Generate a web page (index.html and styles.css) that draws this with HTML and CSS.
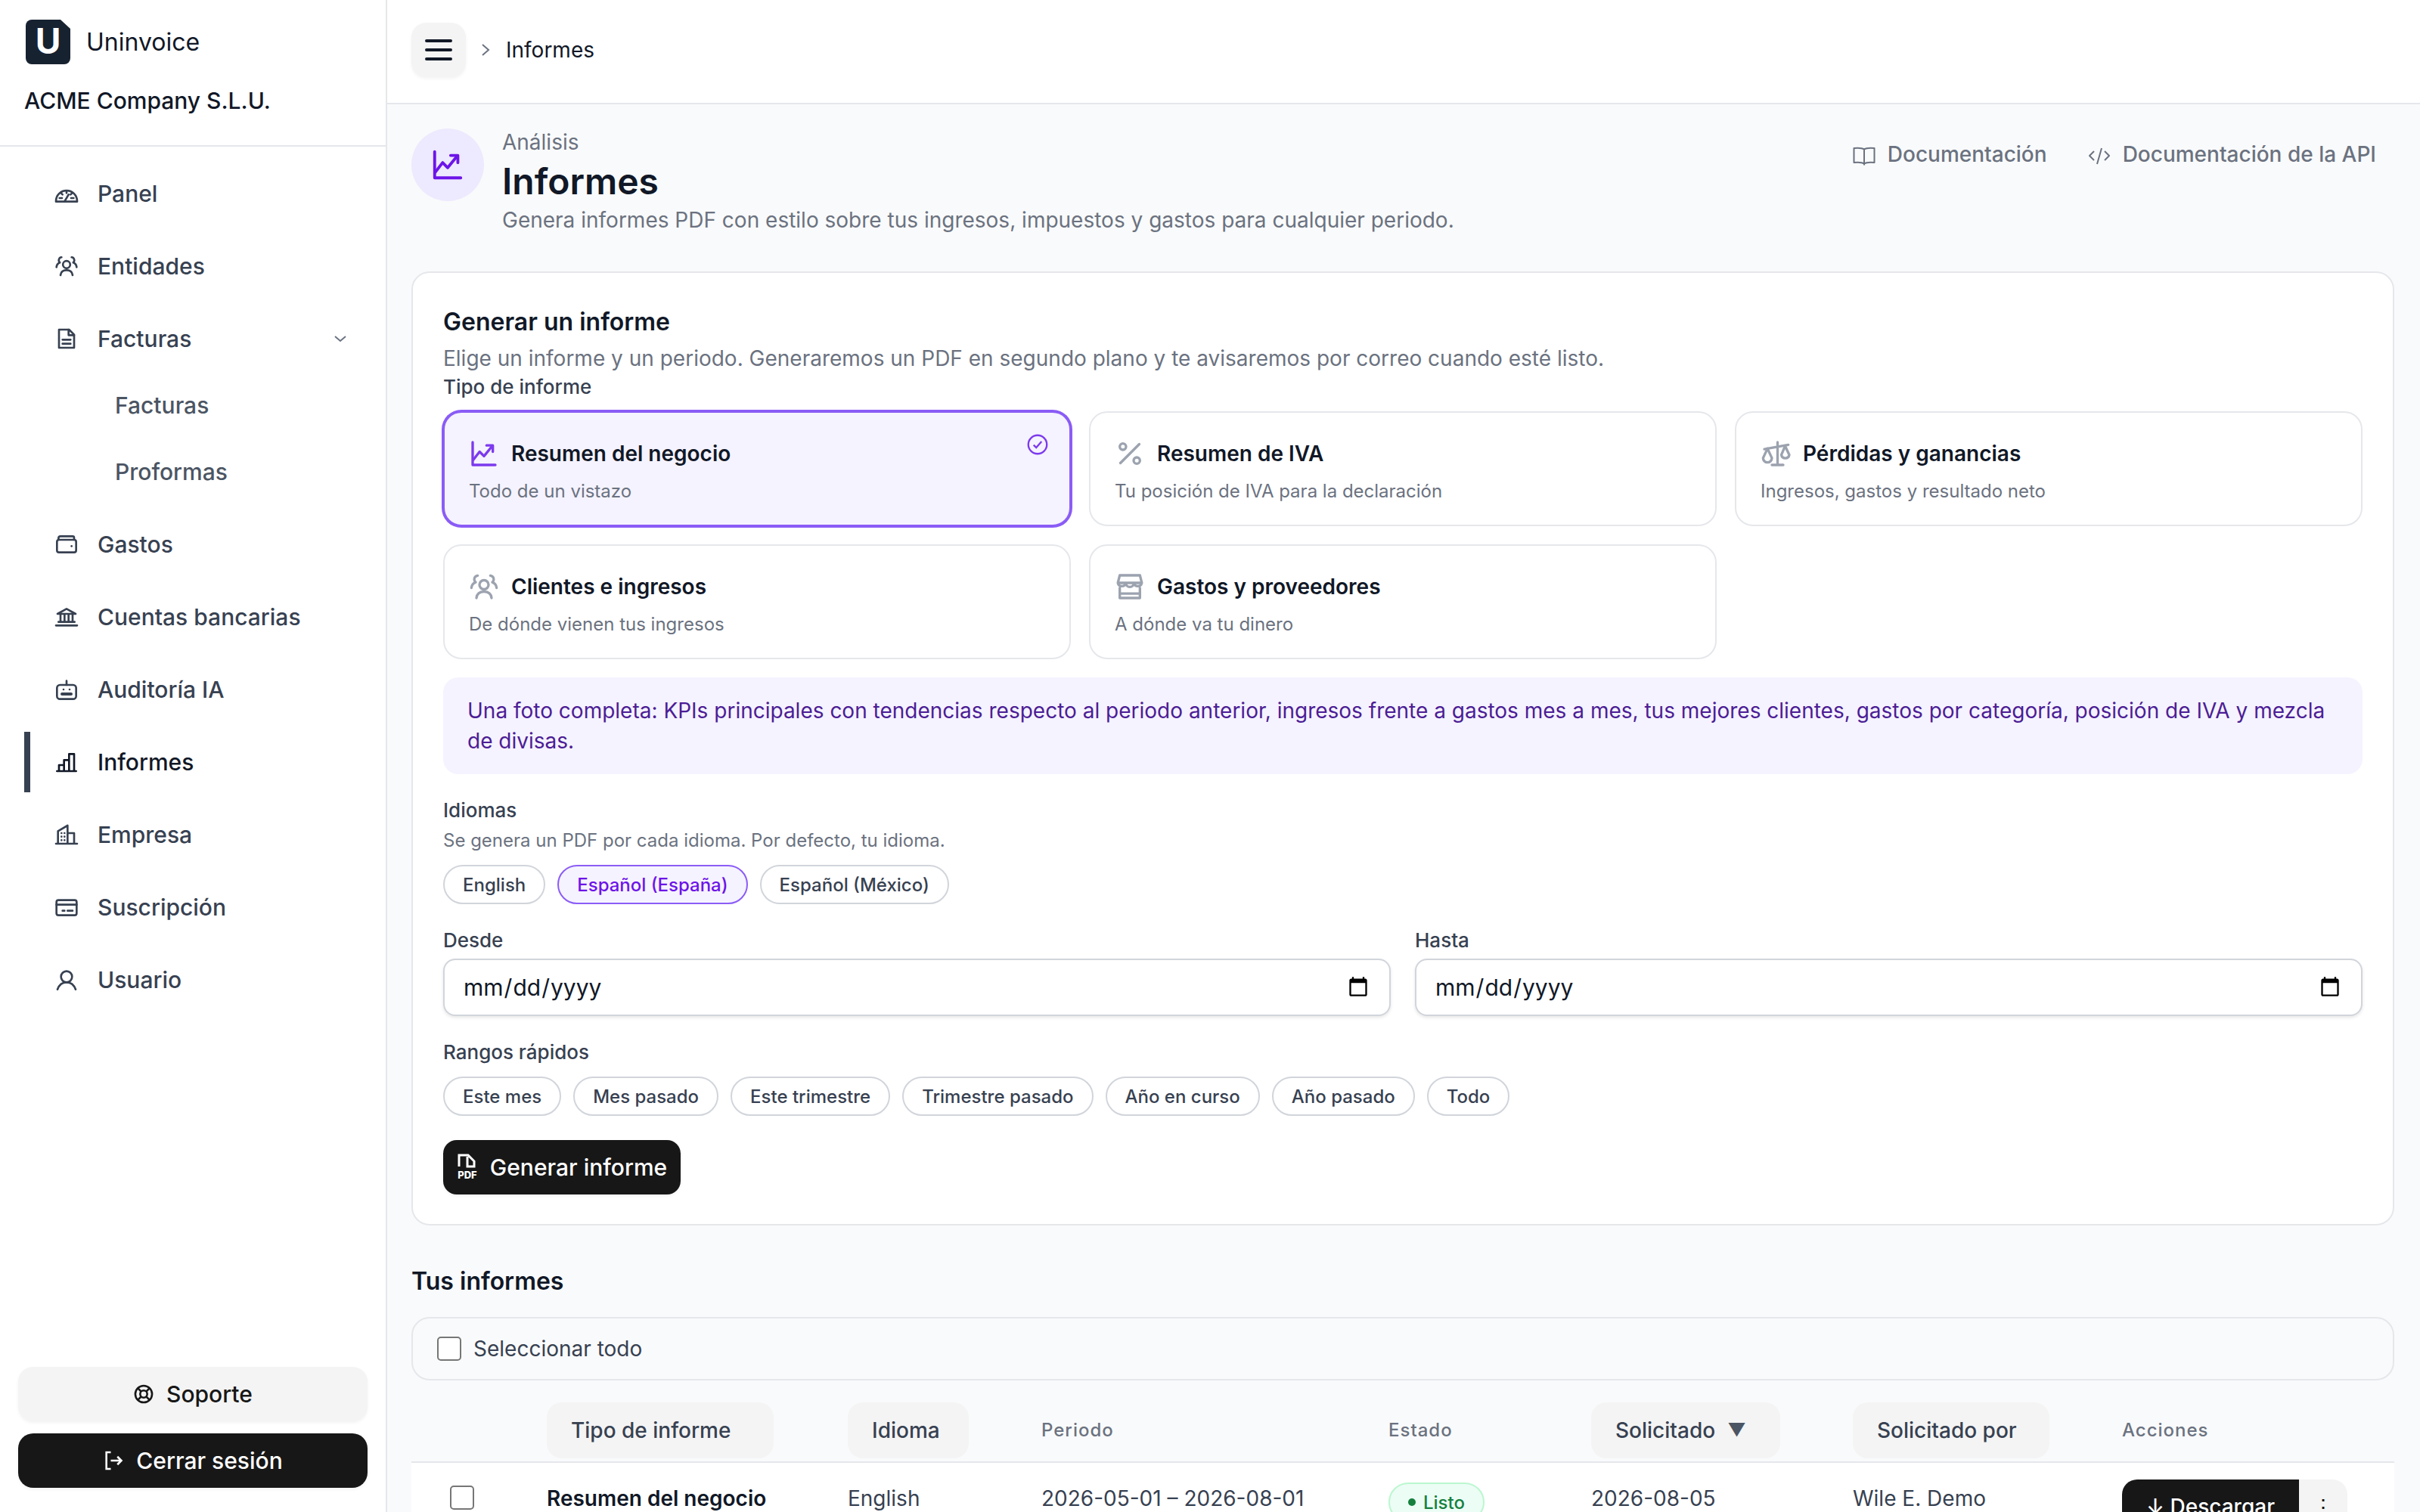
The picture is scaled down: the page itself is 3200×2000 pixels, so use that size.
FILE: index.html
```html
<!DOCTYPE html>
<html lang="es">
<head>
    <meta charset="UTF-8">
    <meta name="viewport" content="width=device-width, initial-scale=1.0">
    <title>Informes - Uninvoice</title>
    <link rel="stylesheet" href="styles.css">
</head>
<body>
    <svg class="sprites" width="0" height="0">
        <symbol id="i-trend" viewBox="0 0 24 24"><path d="M3 3v18h18"/><path d="M3.5 17l5-6.5 3.5 3.5 6.5-8"/><path d="M14 5.5h5v5"/></symbol>
        <symbol id="i-group" viewBox="0 0 24 24"><circle cx="12" cy="10.5" r="3.6"/><path d="M6 21c.4-3.4 2.8-5 6-5s5.600 1.600 6 5"/><path d="M7 3.200a3 3 0 0 0-1.600 5.300c-2 .8-3.200 2.300-3.400 4.500"/><path d="M17 3.200a3 3 0 0 1 1.600 5.300c2 .8 3.200 2.300 3.400 4.500"/></symbol>
    </svg>

    <div class="app">
        <aside class="sidebar">
            <div class="brand">
                <div class="brand-row">
                    <svg class="logo" viewBox="0 0 59 59"><path d="M8 0h38l13 12v39a8 8 0 0 1-8 8H8a8 8 0 0 1-8-8V8a8 8 0 0 1 8-8z" fill="#172231"/><text x="29.500" y="45" text-anchor="middle" class="logo-letter">U</text></svg>
                    <span class="brand-name">Uninvoice</span>
                </div>
                <div class="company">ACME Company S.L.U.</div>
            </div>

            <nav class="nav">
                <a class="nav-item">
                    <svg class="nav-icon" viewBox="0 0 24 24"><path d="M1.500 19.500a10.500 10.500 0 0 1 21 0v.5h-21z"/><path d="M12 9.500v2M6.500 11.500l1.500 1.500M17.500 11.500L16 13M5 16.500h2.500M16.500 16.500H19M10.500 19l3.500-6"/></svg>
                    Panel
                </a>
                <a class="nav-item">
                    <svg class="nav-icon"><use href="#i-group"/></svg>
                    Entidades
                </a>
                <a class="nav-item">
                    <svg class="nav-icon" viewBox="0 0 24 24"><path d="M4.500 3h10l5 5v13h-15z"/><path d="M14 3v5.500h5.500M8 13h8M8 17h8"/></svg>
                    Facturas
                    <svg class="nav-caret" viewBox="0 0 24 24"><path d="M5 9l7 6 7-6"/></svg>
                </a>
                <div class="nav-sub">
                    <a class="nav-subitem">Facturas</a>
                    <a class="nav-subitem">Proformas</a>
                </div>
                <a class="nav-item">
                    <svg class="nav-icon" viewBox="0 0 24 24"><path d="M4 7.500V6a2 2 0 0 1 2-2h12a1.500 1.500 0 0 1 1.500 1.500V7.500"/><rect x="2.500" y="7.500" width="19" height="12.500" rx="2"/><path d="M17 13.800h.01"/></svg>
                    Gastos
                </a>
                <a class="nav-item">
                    <svg class="nav-icon" viewBox="0 0 24 24"><path d="M3 9l9-5 9 5z"/><path d="M6 10v7M10 10v7M14 10v7M18 10v7M4 17h16M1.500 20.500h21"/></svg>
                    Cuentas bancarias
                </a>
                <a class="nav-item">
                    <svg class="nav-icon" viewBox="0 0 24 24"><rect x="2.500" y="7.500" width="19" height="14" rx="3"/><path d="M12 7.500V3.500M9 12h.01M15 12h.01"/><path d="M7.500 16.500h9" class="thick"/></svg>
                    Auditoría IA
                </a>
                <a class="nav-item active">
                    <svg class="nav-icon" viewBox="0 0 24 24"><path d="M2.500 21h19M4.500 21v-6h5v6M9.500 21V10h5v11M14.500 21V4h5v17"/></svg>
                    Informes
                </a>
                <a class="nav-item">
                    <svg class="nav-icon" viewBox="0 0 24 24"><path d="M1.500 21h21M3.500 21V8.500L13 3v18M13 10.500h6.500V21"/><path d="M7 10.500h.01M10 10.500h.01M7 14h.01M10 14h.01M7 17.500h.01M10 17.500h.01"/></svg>
                    Empresa
                </a>
                <a class="nav-item">
                    <svg class="nav-icon" viewBox="0 0 24 24"><rect x="2" y="5" width="20" height="15" rx="2"/><path d="M2 9.500h20M8 15.500h2M13 15.500h5"/></svg>
                    Suscripción
                </a>
                <a class="nav-item">
                    <svg class="nav-icon" viewBox="0 0 24 24"><circle cx="12" cy="9" r="5.500"/><path d="M3 21.500c1.500-4 4.800-7 9-7s7.500 3 9 7"/></svg>
                    Usuario
                </a>
            </nav>

            <div class="sidebar-foot">
                <button class="btn btn-light">
                    <svg class="btn-icon" viewBox="0 0 24 24"><circle cx="12" cy="12" r="9.500"/><circle cx="12" cy="12" r="4"/><path d="M5.300 5.300l3.900 3.900M18.700 5.300l-3.900 3.900M5.300 18.700l3.900-3.900M18.700 18.700l-3.900-3.900"/></svg>
                    Soporte
                </button>
                <button class="btn btn-dark">
                    <svg class="btn-icon" viewBox="0 0 24 24"><path d="M9 2.500H4v19h5M9 12h12M16.500 7.500L21 12l-4.500 4.500"/></svg>
                    Cerrar sesión
                </button>
            </div>
        </aside>

        <div class="content">
            <header class="topbar">
                <button class="menu-btn">
                    <svg class="menu-icon" viewBox="0 0 36 28"><path d="M2 2h32M2 14h32M2 26h32"/></svg>
                </button>
                <svg class="crumb-sep" viewBox="0 0 12 18"><path d="M2 2l8 7-8 7"/></svg>
                <span class="crumb">Informes</span>
            </header>

            <main class="main">
                <div class="page-head">
                    <div class="page-badge">
                        <svg class="page-badge-icon"><use href="#i-trend"/></svg>
                    </div>
                    <div class="page-titles">
                        <div class="eyebrow">Análisis</div>
                        <h1>Informes</h1>
                        <p class="lead">Genera informes PDF con estilo sobre tus ingresos, impuestos y gastos para cualquier periodo.</p>
                    </div>
                    <div class="doc-links">
                        <a class="doc-link">
                            <svg viewBox="0 0 30 26"><path d="M15 4.500C12 2.500 6 2.500 1.500 3v19c4.500-.5 10.500-.5 13.500 1.500 3-2 9-2 13.500-1.500V3C24 2.500 18 2.500 15 4.500zM15 4.500v21"/></svg>
                            Documentación
                        </a>
                        <a class="doc-link">
                            <svg viewBox="0 0 30 26"><path d="M8 7l-6 6 6 6M22 7l6 6-6 6M18 3l-6 21"/></svg>
                            Documentación de la API
                        </a>
                    </div>
                </div>

                <section class="card">
                    <h2>Generar un informe</h2>
                    <p class="card-lead">Elige un informe y un periodo. Generaremos un PDF en segundo plano y te avisaremos por correo cuando esté listo.</p>

                    <div class="field-label type-label">Tipo de informe</div>
                    <div class="type-grid">
                        <div class="type-card selected">
                            <svg class="check" viewBox="0 0 24 24"><circle cx="12" cy="12" r="10.500"/><path d="M7.500 12.500l3 3 6-7"/></svg>
                            <div class="type-title">
                                <svg class="type-icon"><use href="#i-trend"/></svg>
                                Resumen del negocio
                            </div>
                            <div class="type-sub">Todo de un vistazo</div>
                        </div>
                        <div class="type-card">
                            <div class="type-title">
                                <svg class="type-icon" viewBox="0 0 24 24"><path d="M19.500 4.500l-15 15"/><circle cx="6.500" cy="6.500" r="2.500"/><circle cx="17.500" cy="17.500" r="2.500"/></svg>
                                Resumen de IVA
                            </div>
                            <div class="type-sub">Tu posición de IVA para la declaración</div>
                        </div>
                        <div class="type-card">
                            <div class="type-title">
                                <svg class="type-icon" viewBox="0 0 24 24"><path d="M13.500 3v18M9 21h9M3 8.500l19-3.500"/><path d="M5.500 8l-3.500 7.500a3.500 3.500 0 0 0 7 0z"/><path d="M19.500 6l-3 7a3.200 3.200 0 0 0 6.300 0z"/></svg>
                                Pérdidas y ganancias
                            </div>
                            <div class="type-sub">Ingresos, gastos y resultado neto</div>
                        </div>
                        <div class="type-card">
                            <div class="type-title">
                                <svg class="type-icon"><use href="#i-group"/></svg>
                                Clientes e ingresos
                            </div>
                            <div class="type-sub">De dónde vienen tus ingresos</div>
                        </div>
                        <div class="type-card">
                            <div class="type-title">
                                <svg class="type-icon" viewBox="0 0 24 24"><path d="M4 3h16l1.500 6h-19zM2.500 9a3.200 3.200 0 0 0 6.300 0 3.200 3.200 0 0 0 6.400 0 3.200 3.200 0 0 0 6.300 0M4 13v8h16v-8M4 17.500h16"/></svg>
                                Gastos y proveedores
                            </div>
                            <div class="type-sub">A dónde va tu dinero</div>
                        </div>
                    </div>

                    <div class="type-note">Una foto completa: KPIs principales con tendencias respecto al periodo anterior, ingresos frente a gastos mes a mes, tus mejores clientes, gastos por categoría, posición de IVA y mezcla de divisas.</div>

                    <div class="field-label lang-label">Idiomas</div>
                    <div class="hint">Se genera un PDF por cada idioma. Por defecto, tu idioma.</div>
                    <div class="chips">
                        <span class="chip">English</span>
                        <span class="chip active">Español (España)</span>
                        <span class="chip">Español (México)</span>
                    </div>

                    <div class="date-row">
                        <label class="date-field">
                            <span class="field-label">Desde</span>
                            <input type="date" class="date-input">
                        </label>
                        <label class="date-field">
                            <span class="field-label">Hasta</span>
                            <input type="date" class="date-input">
                        </label>
                    </div>

                    <div class="field-label range-label">Rangos rápidos</div>
                    <div class="chips">
                        <span class="chip">Este mes</span>
                        <span class="chip">Mes pasado</span>
                        <span class="chip">Este trimestre</span>
                        <span class="chip">Trimestre pasado</span>
                        <span class="chip">Año en curso</span>
                        <span class="chip">Año pasado</span>
                        <span class="chip">Todo</span>
                    </div>

                    <button class="btn btn-dark generate">
                        <svg class="pdf-icon" viewBox="0 0 28 36"><path d="M3 17V2h12l8 8v7h-9V4"/><text x="14" y="33" text-anchor="middle" class="pdf-text">PDF</text></svg>
                        Generar informe
                    </button>
                </section>

                <h2 class="list-title">Tus informes</h2>
                <label class="select-all">
                    <span class="box"></span>
                    Seleccionar todo
                </label>

                <table class="reports">
                    <colgroup>
                        <col class="c-check"><col class="c-type"><col class="c-lang"><col class="c-period"><col class="c-status"><col class="c-date"><col class="c-by"><col class="c-actions">
                    </colgroup>
                    <thead>
                        <tr>
                            <th></th>
                            <th><span class="sort type-sort">Tipo de informe</span></th>
                            <th><span class="sort lang-sort">Idioma</span></th>
                            <th class="plain">Periodo</th>
                            <th class="plain">Estado</th>
                            <th><span class="sort date-sort">Solicitado <span class="arrow">▼</span></span></th>
                            <th><span class="sort by-sort">Solicitado por</span></th>
                            <th class="plain">Acciones</th>
                        </tr>
                    </thead>
                    <tbody>
                        <tr>
                            <td><span class="box row-box"></span></td>
                            <td class="strong">Resumen del negocio</td>
                            <td>English</td>
                            <td>2026-05-01 – 2026-08-01</td>
                            <td><span class="status"><span class="dot"></span>Listo</span></td>
                            <td>2026-08-05</td>
                            <td>Wile E. Demo</td>
                            <td>
                                <div class="row-actions">
                                    <span class="act-main">↓ Descargar</span>
                                    <span class="act-more">⋮</span>
                                </div>
                            </td>
                        </tr>
                    </tbody>
                </table>
            </main>
        </div>
    </div>
</body>
</html>
```

FILE: styles.css
```css
* {
    box-sizing: border-box;
}
html, body {
    margin: 0;
    height: 2000px;
    overflow: hidden;
}
body {
    font-family: 'Inter', 'Liberation Sans', sans-serif;
    color: #111827;
    background-color: #ffffff;
}
h1, h2, p {
    margin: 0;
}
.sprites {
    position: absolute;
}
symbol path, symbol circle {
    fill: none;
    stroke: currentColor;
    stroke-width: 2;
    stroke-linecap: round;
    stroke-linejoin: round;
}
.app {
    display: flex;
    height: 2000px;
}

/* sidebar */
.sidebar {
    width: 512px;
    flex: none;
    display: flex;
    flex-direction: column;
    border-right: 2px solid #e5e7eb;
    background-color: #ffffff;
}
.brand {
    height: 194px;
    padding: 26px 32px 0;
    border-bottom: 2px solid #e5e7eb;
}
.brand-row {
    display: flex;
    align-items: center;
    gap: 21px;
    margin-left: 2px;
}
.logo {
    width: 59px;
    height: 59px;
}
.logo-letter {
    font-family: 'Inter', sans-serif;
    font-size: 46px;
    font-weight: 700;
    fill: #ffffff;
}
.brand-name {
    font-size: 32px;
    color: #111827;
}
.company {
    margin-top: 28px;
    font-size: 30px;
    font-weight: 500;
    line-height: 40px;
    color: #111827;
}
.nav {
    display: flex;
    flex-direction: column;
    gap: 16px;
    padding: 22px 24px 0 32px;
    flex: 1;
}
.nav-item {
    display: flex;
    align-items: center;
    height: 80px;
    padding-left: 40px;
    gap: 25px;
    font-size: 30px;
    font-weight: 500;
    color: #374151;
}
.nav-item.active {
    border-left: 8px solid #374151;
    padding-left: 32px;
    color: #111827;
}
.nav-icon {
    width: 32px;
    height: 32px;
    flex: none;
    fill: none;
    stroke: currentColor;
    stroke-width: 2;
    stroke-linecap: round;
    stroke-linejoin: round;
}
.nav-icon .thick {
    stroke-width: 3;
}
.nav-caret {
    width: 24px;
    height: 24px;
    margin-left: auto;
    margin-right: 24px;
    fill: none;
    stroke: #6b7280;
    stroke-width: 2;
}
.nav-sub {
    display: flex;
    flex-direction: column;
    gap: 8px;
    margin-top: -8px;
}
.nav-subitem {
    height: 80px;
    line-height: 80px;
    padding-left: 120px;
    font-size: 30px;
    font-weight: 500;
    color: #4b5563;
}
.sidebar-foot {
    display: flex;
    flex-direction: column;
    gap: 16px;
    padding: 0 24px 32px;
}

/* buttons */
.btn {
    display: flex;
    align-items: center;
    justify-content: center;
    gap: 16px;
    height: 72px;
    border: none;
    border-radius: 20px;
    font-family: inherit;
    font-size: 30px;
    font-weight: 500;
    box-shadow: 0 2px 4px rgba(0, 0, 0, 0.05);
}
.btn-light {
    background-color: #f4f4f4;
    color: #171717;
}
.btn-dark {
    background-color: #171717;
    color: #ffffff;
}
.btn-icon {
    width: 28px;
    height: 28px;
    fill: none;
    stroke: currentColor;
    stroke-width: 2.200;
}

/* top bar */
.content {
    flex: 1;
    min-width: 0;
    display: flex;
    flex-direction: column;
}
.topbar {
    height: 138px;
    flex: none;
    display: flex;
    align-items: center;
    padding: 0 32px 4px;
    border-bottom: 2px solid #e5e7eb;
    background-color: #ffffff;
}
.menu-btn {
    width: 72px;
    height: 72px;
    display: flex;
    align-items: center;
    justify-content: center;
    border: none;
    border-radius: 20px;
    background-color: #f4f4f4;
    box-shadow: 0 2px 4px rgba(0, 0, 0, 0.05);
}
.menu-icon {
    width: 36px;
    height: 28px;
    fill: none;
    stroke: #111827;
    stroke-width: 4;
    stroke-linecap: round;
}
.crumb-sep {
    width: 12px;
    height: 18px;
    margin: 0 21px 0 20px;
    fill: none;
    stroke: #6b7280;
    stroke-width: 2;
}
.crumb {
    font-size: 28px;
    color: #111827;
}

/* page */
.main {
    flex: 1;
    min-height: 0;
    overflow: hidden;
    padding: 32px 34px 0 32px;
    background-color: #f9fafb;
}
.page-head {
    display: flex;
    gap: 24px;
}
.page-badge {
    width: 96px;
    height: 96px;
    flex: none;
    display: flex;
    align-items: center;
    justify-content: center;
    border-radius: 50%;
    background-color: #ede9fe;
    color: #6d14e8;
}
.page-badge-icon {
    width: 46px;
    height: 46px;
}
.page-titles {
    flex: 1;
}
.eyebrow {
    font-size: 28px;
    line-height: 36px;
    color: #6b7280;
}
h1 {
    margin-top: 6px;
    font-size: 48px;
    font-weight: 600;
    line-height: 56px;
    color: #111827;
}
.lead {
    margin-top: 3px;
    font-size: 28px;
    line-height: 40px;
    color: #6b7280;
}
.doc-links {
    display: flex;
    gap: 54px;
    padding: 14px 24px 0 0;
}
.doc-link {
    display: flex;
    align-items: center;
    gap: 16px;
    height: 40px;
    font-size: 28px;
    font-weight: 500;
    color: #6b7280;
}
.doc-link svg {
    width: 30px;
    height: 26px;
    fill: none;
    stroke: #6b7280;
    stroke-width: 2;
    stroke-linejoin: round;
    margin-top: 4px;
}

/* generator card */
.card {
    margin-top: 48px;
    height: 1262px;
    padding: 40px;
    border: 2px solid #e5e7eb;
    border-radius: 24px;
    background-color: #ffffff;
}
.card h2, .list-title {
    font-size: 32px;
    font-weight: 600;
    line-height: 44px;
    color: #111827;
}
.card h2 {
    margin-top: 3px;
}
.card-lead {
    margin-top: 6px;
    font-size: 28px;
    line-height: 40px;
    color: #6b7280;
}
.field-label {
    display: block;
    font-size: 26px;
    font-weight: 500;
    line-height: 36px;
    color: #374151;
}
.type-grid {
    display: grid;
    grid-template-columns: repeat(3, 1fr);
    grid-auto-rows: 152px;
    gap: 24px;
    margin-top: 14px;
}
.type-card {
    position: relative;
    padding: 34px 32px 0;
    border: 2px solid #e5e7eb;
    border-radius: 24px;
    background-color: #ffffff;
}
.type-card.selected {
    border-color: #8b5cf6;
    box-shadow: 0 0 0 2px #8b5cf6;
    background-color: #f5f3ff;
}
.type-title {
    display: flex;
    align-items: center;
    gap: 16px;
    font-size: 28px;
    font-weight: 600;
    line-height: 40px;
    color: #111827;
}
.type-icon {
    width: 40px;
    height: 40px;
    flex: none;
    color: #9ca3af;
    fill: none;
    stroke: #9ca3af;
    stroke-width: 2;
    stroke-linecap: round;
    stroke-linejoin: round;
}
.selected .type-icon {
    color: #7c3aed;
}
.type-sub {
    margin-top: 12px;
    font-size: 24px;
    line-height: 36px;
    color: #6b7280;
}
.check {
    position: absolute;
    top: 28px;
    right: 28px;
    width: 28px;
    height: 28px;
    fill: none;
    stroke: #7c3aed;
    stroke-width: 2;
}
.type-note {
    margin-top: 24px;
    padding: 24px 32px;
    border-radius: 20px;
    font-size: 28px;
    line-height: 40px;
    color: #4c1d95;
    background-color: #f5f3ff;
}
.lang-label {
    margin-top: 30px;
}
.hint {
    margin-top: 4px;
    font-size: 24px;
    line-height: 36px;
    color: #6b7280;
}
.chips {
    display: flex;
    gap: 16px;
    margin-top: 14px;
}
.chip {
    height: 52px;
    display: flex;
    align-items: center;
    padding: 0 24px;
    border: 2px solid #d1d5db;
    border-radius: 26px;
    font-size: 24px;
    font-weight: 500;
    color: #374151;
    background-color: #ffffff;
}
.chip.active {
    border-color: #8b5cf6;
    color: #6d14e8;
    background-color: #f5f3ff;
}
.date-row {
    display: grid;
    grid-template-columns: 1fr 1fr;
    gap: 32px;
    margin-top: 30px;
}
.date-input {
    display: block;
    width: 100%;
    height: 76px;
    margin-top: 6px;
    padding: 0 24px;
    border: 2px solid #d1d5db;
    border-radius: 16px;
    font-family: inherit;
    font-size: 30px;
    color: #111827;
    background-color: #ffffff;
    box-shadow: 0 2px 4px rgba(0, 0, 0, 0.1);
}
.range-label {
    margin-top: 30px;
}
.generate {
    margin-top: 32px;
    width: 314px;
    border-radius: 18px;
}
.pdf-icon {
    width: 28px;
    height: 36px;
    fill: none;
    stroke: #ffffff;
    stroke-width: 3;
}
.pdf-text {
    font-family: 'Inter', sans-serif;
    font-size: 13px;
    font-weight: 800;
    fill: #ffffff;
    stroke: none;
}

/* report list */
.list-title {
    margin-top: 52px;
}
.select-all {
    display: flex;
    align-items: center;
    gap: 16px;
    height: 84px;
    margin-top: 25px;
    padding-left: 32px;
    border: 2px solid #e5e7eb;
    border-radius: 24px;
    font-size: 28px;
    color: #374151;
    background-color: #f9fafb;
}
.box {
    display: inline-block;
    width: 32px;
    height: 32px;
    border: 2px solid #767676;
    border-radius: 5px;
    background-color: #ffffff;
}
.reports {
    width: 100%;
    margin-top: 24px;
    table-layout: fixed;
    border-collapse: collapse;
    background-color: #ffffff;
    font-size: 28px;
    color: #374151;
}
.c-check { width: 179px; }
.c-type { width: 398px; }
.c-lang { width: 256px; }
.c-period { width: 459px; }
.c-status { width: 268px; }
.c-date { width: 346px; }
.c-by { width: 356px; }
.c-actions { width: 360px; }
.reports thead tr {
    height: 84px;
    background-color: #f9fafb;
    border-bottom: 2px solid #e5e7eb;
}
.reports th {
    padding: 0;
    text-align: left;
    font-weight: 500;
}
.reports th.plain {
    font-size: 24px;
    letter-spacing: 1px;
    color: #6b7280;
}
.sort {
    display: inline-flex;
    align-items: center;
    gap: 16px;
    height: 74px;
    padding: 0 32px;
    border-radius: 20px;
    font-size: 28px;
    color: #374151;
    background-color: #f4f4f4;
}
.type-sort { width: 300px; }
.lang-sort { width: 160px; }
.date-sort { width: 250px; }
.by-sort { width: 260px; }
.arrow {
    font-size: 24px;
    color: #4b5563;
}
.reports td {
    padding: 30px 0 0;
    vertical-align: top;
    white-space: nowrap;
}
.reports td.strong {
    font-weight: 600;
    color: #111827;
}
.row-box {
    margin-left: 51px;
}
.status {
    display: inline-flex;
    align-items: center;
    gap: 10px;
    height: 52px;
    margin-top: -8px;
    padding: 0 24px;
    border: 2px solid #bbf7d0;
    border-radius: 26px;
    font-size: 24px;
    font-weight: 500;
    color: #15803d;
    background-color: #ecfdf5;
}
.dot {
    width: 10px;
    height: 10px;
    border-radius: 50%;
    background-color: #15803d;
}
.row-actions {
    display: flex;
    height: 72px;
    margin-top: -8px;
}
.act-main {
    width: 234px;
    display: flex;
    align-items: center;
    justify-content: center;
    border-radius: 20px 0 0 20px;
    font-weight: 500;
    color: #ffffff;
    background-color: #171717;
}
.act-more {
    width: 64px;
    display: flex;
    align-items: center;
    justify-content: center;
    border-radius: 0 20px 20px 0;
    color: #171717;
    background-color: #f4f4f4;
}
```
